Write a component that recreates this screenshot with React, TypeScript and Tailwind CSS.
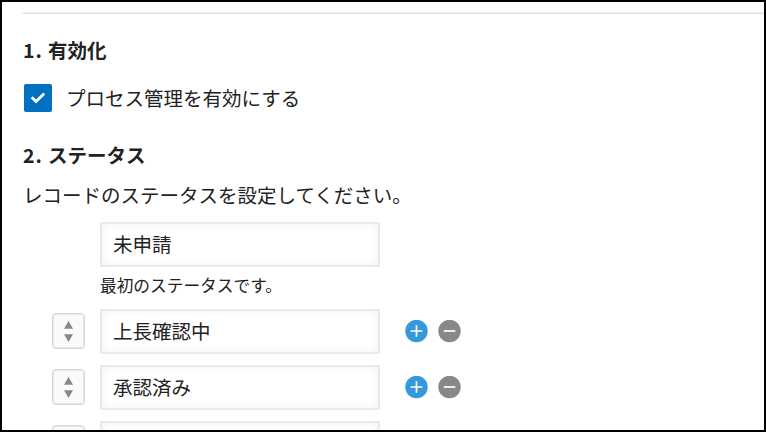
const statuses = ["上長確認中", "承認済み", ""];

function StatusInput({ value }: { value: string }) {
  return (
    <div className="flex h-[45px] w-[280px] items-center border-2 border-[#e6ebeb] bg-white pb-[2px] pl-[11px] text-[19.5px] shadow-[inset_0_0_7px_#f1f1f1]">
      {value}
    </div>
  );
}

function SortHandle() {
  return (
    <div className="mb-px mr-[15px] flex h-[36px] w-[33px] items-center justify-center rounded-[4px] border border-[#d2d7d9] bg-[#f9fafc] shadow-[inset_0_0_0_1px_#e4e8ea]">
      <svg width="9" height="21" viewBox="0 0 9 21" fill="#888">
        <path d="M4.5 0L9 7.7H0zM4.5 21L0 13.3H9z" />
      </svg>
    </div>
  );
}

function RoundButton({ plus }: { plus?: boolean }) {
  return (
    <svg width="23" height="23" viewBox="0 0 23 23" fill="none">
      <circle cx="11.5" cy="11" r="11.2" fill={plus ? "#3498db" : "#888"} />
      <path d={plus ? "M5.7 11h11.6M11.5 5.2v11.6" : "M5.7 11h11.6"} stroke="#fff" strokeWidth="1.7" />
    </svg>
  );
}

function Heading({ number, title }: { number: string; title: string }) {
  return (
    <h2 className="flex h-[32px] text-[19.5px] font-bold leading-[32px]">
      <span className="w-[25px] tracking-[1px]">{number}</span>
      <span>{title}</span>
    </h2>
  );
}

export default function App() {
  return (
    <div className="h-[432px] w-[766px] overflow-hidden border-2 border-black bg-white pl-[21px] pt-[10px] font-['Noto_Sans_CJK_JP',sans-serif] text-[#222]">
      <div className="h-[2px] border-b border-[#dedede] bg-[#f0f0f0]" />
      <div className="mt-[20px]">
        <Heading number="1." title="有効化" />
      </div>
      <div className="ml-px mt-[18px] flex h-[28px] items-center">
        <div className="flex h-[28px] w-[28px] items-center justify-center rounded-[2px] bg-[#0070c0]">
          <svg width="28" height="28" viewBox="0 0 28 28" fill="none">
            <path d="M7.7 13.3L12 17.6L20.2 9.4" stroke="#fff" strokeWidth="2.8" />
          </svg>
        </div>
        <span className="-mt-px ml-[14px] text-[19.5px]">プロセス管理を有効にする</span>
      </div>
      <div className="mt-[27px]">
        <Heading number="2." title="ステータス" />
      </div>
      <p className="mt-[8px] h-[32px] text-[19.5px] leading-[32px]">レコードのステータスを設定してください。</p>
      <div className="ml-[77px] mt-[11px]">
        <StatusInput value="未申請" />
        <p className="mt-[6px] h-[24px] text-[16.7px] leading-[24px]">最初のステータスです。</p>
      </div>
      <div className="ml-[29px] mt-[12px] flex flex-col gap-[11px]">
        {statuses.map((status) => (
          <div key={status} className="flex items-center">
            <SortHandle />
            <StatusInput value={status} />
            <div className="ml-[25px] flex gap-[10px]">
              <RoundButton plus />
              <RoundButton />
            </div>
          </div>
        ))}
      </div>
    </div>
  );
}
